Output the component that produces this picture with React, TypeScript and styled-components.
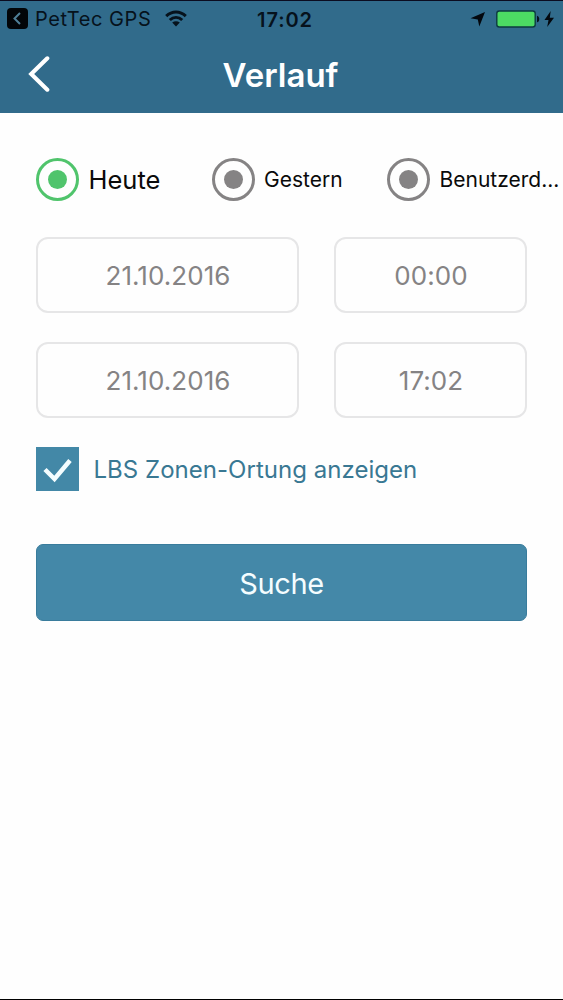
import React from "react";
import styled, { createGlobalStyle } from "styled-components";

const Global = createGlobalStyle`
  * { box-sizing: border-box; }
  body { margin: 0; background: #fefefe; font-family: Inter, "Liberation Sans", sans-serif; }
  button, input { font-family: inherit; }
`;

const Screen = styled.div`
  display: flex;
  flex-direction: column;
  height: 1000px;
  overflow: hidden;
  background: #fefefe;
  border-top: 1px solid #0b0c20;
  border-bottom: 1px solid #000;
`;

const Header = styled.header`
  height: 112px;
  flex: none;
  background: #316b8b;
`;

const StatusBar = styled.div`
  display: grid;
  grid-template-columns: 1fr auto 1fr;
  align-items: center;
  height: 35px;
  padding: 0 8px 0 7px;
  color: #06121c;
`;

const StatusGroup = styled.div<{ $end?: boolean }>`
  display: flex;
  align-items: center;
  justify-content: ${(p) => (p.$end ? "flex-end" : "flex-start")};
`;

const Carrier = styled.span`
  margin: 0 14px 0 7px;
  font-size: 20px;
  line-height: 24px;
  letter-spacing: 0.55px;
  white-space: nowrap;
`;

const Clock = styled.span`
  padding: 2px 0 0 8px;
  font-size: 20px;
  line-height: 24px;
  font-weight: 600;
  letter-spacing: 0.9px;
`;

const NavBar = styled.div`
  display: grid;
  grid-template-columns: 80px 1fr 80px;
  align-items: center;
  height: 77px;
`;

const BackButton = styled.button`
  display: flex;
  padding: 0 0 2px 28px;
  border: 0;
  background: none;
`;

const Title = styled.h1`
  margin: 0 2px 0 0;
  text-align: center;
  color: #fff;
  font-size: 33px;
  line-height: 40px;
  font-weight: 600;
`;

const Form = styled.main`
  display: flex;
  flex-direction: column;
  padding: 44px 36px 0 36px;
`;

const RadioRow = styled.div`
  display: grid;
  grid-template-columns: 175.5px 175.5px 180px;
  height: 45px;
`;

const RadioOption = styled.label`
  display: flex;
  align-items: center;
`;

const RadioCircle = styled.span<{ $on?: boolean }>`
  display: flex;
  align-items: center;
  justify-content: center;
  flex: none;
  width: 43px;
  height: 43px;
  border: 3px solid ${(p) => (p.$on ? "#50c46c" : "#858384")};
  border-radius: 50%;
  &::after {
    content: "";
    width: 19px;
    height: 19px;
    border-radius: 50%;
    background: ${(p) => (p.$on ? "#50c46c" : "#858384")};
  }
`;

const RadioText = styled.span<{ $large?: boolean }>`
  margin-left: ${(p) => (p.$large ? 9.5 : 9.5)}px;
  color: #0a0a0a;
  font-size: ${(p) => (p.$large ? 25.5 : 21)}px;
  letter-spacing: 0;
  white-space: nowrap;
`;

const FieldGrid = styled.div`
  display: grid;
  grid-template-columns: 263px 193px;
  column-gap: 35px;
  row-gap: 29px;
  margin-top: 35px;
`;

const Field = styled.div`
  display: flex;
  align-items: center;
  justify-content: center;
  height: 76px;
  padding: 1px 0 0 1px;
  border: 2px solid #e6e6e7;
  border-radius: 12px;
  color: #858384;
  font-size: 26px;
  letter-spacing: 0.05px;
`;

const CheckRow = styled.label`
  display: flex;
  align-items: flex-start;
  margin-top: 29px;
  height: 45px;
`;

const CheckBox = styled.span`
  width: 43px;
  height: 44px;
  background: #4388a7;
`;

const CheckText = styled.span`
  margin-left: 14.5px;
  color: #397893;
  font-size: 24px;
  line-height: 45px;
  letter-spacing: 0.03px;
  white-space: nowrap;
`;

const SearchButton = styled.button`
  height: 77px;
  margin-top: 52px;
  padding: 2px 0 0;
  border: 1px solid #397c9c;
  border-radius: 7px;
  background: #4488a8;
  color: #f4fdff;
  font-size: 29px;
  letter-spacing: -0.4px;
`;

const radios = ["Heute", "Gestern", "Benutzerd..."];
const fields = ["21.10.2016", "00:00", "21.10.2016", "17:02"];

export default function App() {
  return (
    <>
      <Global />
      <Screen>
        <Header>
          <StatusBar>
            <StatusGroup>
              <svg width="21" height="21" viewBox="0 0 21 21">
                <rect width="21" height="21" rx="4" fill="#020508" />
                <path d="M13 5 7.5 10.5 13 16" fill="none" stroke="#4f7f97" strokeWidth="2" />
              </svg>
              <Carrier>PetTec GPS</Carrier>
              <svg width="22" height="17" viewBox="0 0 22 17" fill="none" stroke="#06121c" strokeWidth="3">
                <path d="M1.2 6.2C7 .6 15 .6 20.8 6.2" />
                <path d="M4.8 10C8.5 6.5 13.5 6.5 17.2 10" />
                <path d="M11 16.5 7.2 12.5C9.5 10.8 12.5 10.8 14.8 12.5Z" fill="#06121c" stroke="none" />
              </svg>
            </StatusGroup>
            <Clock>17:02</Clock>
            <StatusGroup $end>
              <svg width="85" height="20" viewBox="0 0 85 20">
                <path d="M15 3 9.3 17.5 7.8 10.4.5 9.3Z" fill="#03080e" />
                <rect x="26.8" y="2" width="38.4" height="16" rx="2.5" fill="#4cdb63" stroke="#0d3b40" strokeWidth="1.4" />
                <path d="M67 6.7c3 .4 3 6.2 0 6.6Z" fill="#06121c" />
                <path d="M80.7 2 74.5 11h4L77.2 18 84 8.8h-4.2Z" fill="#03080e" />
              </svg>
            </StatusGroup>
          </StatusBar>
          <NavBar>
            <BackButton aria-label="Zurück">
              <svg width="22" height="36" viewBox="0 0 22 36">
                <path d="M19.3 2.3 3.2 18 19.3 33.7" fill="none" stroke="#fff" strokeWidth="4.1" strokeLinecap="round" />
              </svg>
            </BackButton>
            <Title>Verlauf</Title>
          </NavBar>
        </Header>
        <Form>
          <RadioRow>
            {radios.map((label, i) => (
              <RadioOption key={label}>
                <RadioCircle $on={i === 0} />
                <RadioText $large={i === 0}>{label}</RadioText>
              </RadioOption>
            ))}
          </RadioRow>
          <FieldGrid>
            {fields.map((value, i) => (
              <Field key={i}>{value}</Field>
            ))}
          </FieldGrid>
          <CheckRow>
            <CheckBox>
              <svg width="43" height="44" viewBox="0 0 43 44">
                <path d="M9 22.5 18.5 32 34 13.5" fill="none" stroke="#f4fdff" strokeWidth="4.5" />
              </svg>
            </CheckBox>
            <CheckText>LBS Zonen-Ortung anzeigen</CheckText>
          </CheckRow>
          <SearchButton>Suche</SearchButton>
        </Form>
      </Screen>
    </>
  );
}
